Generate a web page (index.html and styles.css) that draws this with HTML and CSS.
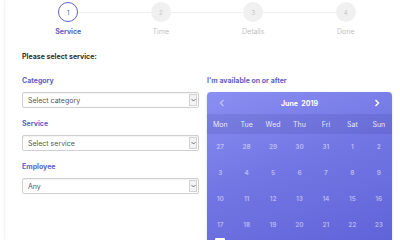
FILE: index.html
```html
<!DOCTYPE html>
<html>
<head>
<meta charset="utf-8">
<link rel="stylesheet" href="styles.css">
</head>
<body>
<div class="page">
  <div class="stepper">
    <div class="step active"><div class="circle">1</div><div class="label">Service</div></div>
    <div class="step"><div class="circle">2</div><div class="label">Time</div></div>
    <div class="step"><div class="circle">3</div><div class="label">Details</div></div>
    <div class="step last"><div class="circle">4</div><div class="label">Done</div></div>
  </div>
  <div class="title">Please select service:</div>
  <div class="cols">
    <div class="left">
      <div class="field">
        <div class="flabel">Category</div>
        <div class="select"><span>Select category</span><span class="arrow"><svg width="5" height="4" viewBox="0 0 5 4"><path d="M0.5 1 L2.5 3 L4.5 1" fill="none" stroke="#666" stroke-width="0.9"/></svg></span></div>
      </div>
      <div class="field">
        <div class="flabel">Service</div>
        <div class="select"><span>Select service</span><span class="arrow"><svg width="5" height="4" viewBox="0 0 5 4"><path d="M0.5 1 L2.5 3 L4.5 1" fill="none" stroke="#666" stroke-width="0.9"/></svg></span></div>
      </div>
      <div class="field">
        <div class="flabel">Employee</div>
        <div class="select"><span>Any</span><span class="arrow"><svg width="5" height="4" viewBox="0 0 5 4"><path d="M0.5 1 L2.5 3 L4.5 1" fill="none" stroke="#666" stroke-width="0.9"/></svg></span></div>
      </div>
    </div>
    <div class="right">
      <div class="flabel">I'm available on or after</div>
      <div class="cal">
        <div class="cal-head">
          <svg class="nav dim" width="6" height="8" viewBox="0 0 6 8"><path d="M4.5 1 L1.5 4 L4.5 7" fill="none" stroke="currentColor" stroke-width="1.4"/></svg>
          <span class="month">June&nbsp; 2019</span>
          <svg class="nav" width="6" height="8" viewBox="0 0 6 8"><path d="M1.5 1 L4.5 4 L1.5 7" fill="none" stroke="currentColor" stroke-width="1.4"/></svg>
        </div>
        <div class="cal-grid week">
          <span>Mon</span><span>Tue</span><span>Wed</span><span>Thu</span><span>Fri</span><span>Sat</span><span>Sun</span>
        </div>
        <div class="cal-grid days">
          <span>27</span><span>28</span><span>29</span><span>30</span><span>31</span><span>1</span><span>2</span>
          <span>3</span><span>4</span><span>5</span><span>6</span><span>7</span><span>8</span><span>9</span>
          <span>10</span><span>11</span><span>12</span><span>13</span><span>14</span><span>15</span><span>16</span>
          <span>17</span><span>18</span><span>19</span><span>20</span><span>21</span><span>22</span><span>23</span>
        </div>
        <div class="cal-grid next">
          <span class="sel"></span>
        </div>
      </div>
    </div>
  </div>
</div>
</body>
</html>
```
FILE: styles.css
```css
html, body {
  margin: 0;
  padding: 0;
  background: #fff;
  overflow: hidden;
  height: 240px;
}
body {
  font-family: Inter, Roboto, "Liberation Sans", sans-serif;
}
.page {
  margin-left: 5px;
  height: 240px;
  box-sizing: border-box;
  box-shadow: -1px 0 2px rgba(0,0,0,0.07);
  padding: 2px 8px 0 17px;
  overflow: hidden;
}
.stepper {
  display: grid;
  grid-template-columns: repeat(4, 1fr);
  width: 370px;
}
.step {
  position: relative;
  display: flex;
  flex-direction: column;
  align-items: center;
}
.step::after {
  content: "";
  position: absolute;
  top: 10px;
  left: 50%;
  width: 100%;
  height: 1px;
  background: #efefef;
  z-index: 0;
}
.step.last::after { display: none; }
.circle {
  position: relative;
  z-index: 1;
  width: 20px;
  height: 20px;
  border-radius: 50%;
  background: #f0f0f0;
  color: #c4c4c4;
  font-size: 6px;
  display: flex;
  align-items: center;
  justify-content: center;
  box-sizing: border-box;
}
.step.active .circle {
  background: #fff;
  border: 1.5px solid #5f62c6;
  color: #4a4d9a;
}
.label {
  margin-top: 5px;
  font-size: 7px;
  color: #c0c0c0;
  line-height: 10px;
}
.step.active .label {
  color: #5f62c6;
  font-weight: 700;
}
.title {
  margin-top: 15px;
  font-size: 7px;
  font-weight: 700;
  color: #333;
  line-height: 10px;
}
.cols {
  display: flex;
  gap: 8px;
  margin-top: 14px;
}
.left {
  width: 177px;
  display: flex;
  flex-direction: column;
  gap: 11px;
}
.right {
  width: 185px;
}
.flabel {
  font-size: 7px;
  font-weight: 700;
  color: #5f62c6;
  line-height: 10px;
  margin-bottom: 6px;
}
.select {
  height: 16px;
  box-sizing: border-box;
  border: 1px solid #cfcfcf;
  border-radius: 2px;
  display: flex;
  align-items: center;
  justify-content: space-between;
  padding-left: 5px;
  padding-right: 1px;
  font-size: 7px;
  color: #555;
  box-shadow: inset 0 1px 1px rgba(0,0,0,0.05);
}
.arrow {
  width: 8px;
  height: 12px;
  box-sizing: border-box;
  border: 1px solid #d2d2d2;
  background: #f3f3f3;
  display: flex;
  align-items: center;
  justify-content: center;
}
.cal {
  margin-top: 4px;
  height: 150px;
  border-radius: 4px 4px 0 0;
  background: linear-gradient(160deg, #8a8ff2 0%, #7377e4 45%, #5f63d8 100%);
  color: #fff;
  box-shadow: 0 1px 3px rgba(0,0,0,0.15);
  overflow: hidden;
}
.cal-head {
  height: 22px;
  display: flex;
  align-items: center;
  justify-content: space-between;
  padding: 0 12px 0 12px;
}
.nav { color: #fff; }
.nav.dim { color: rgba(255,255,255,0.45); }
.month {
  font-size: 7px;
  font-weight: 700;
}
.cal-grid {
  display: grid;
  grid-template-columns: repeat(7, 1fr);
  text-align: center;
}
.week {
  height: 20px;
  align-items: center;
  background: rgba(40,40,120,0.12);
  font-size: 7px;
  color: rgba(255,255,255,0.85);
}
.days {
  grid-auto-rows: 26px;
  align-items: center;
  font-size: 6.5px;
  font-weight: 600;
  color: rgba(255,255,255,0.5);
}
.next {
  height: 4px;
}
.next .sel {
  justify-self: center;
  width: 10px;
  height: 6px;
  background: #fff;
  border-radius: 1px;
}
```
